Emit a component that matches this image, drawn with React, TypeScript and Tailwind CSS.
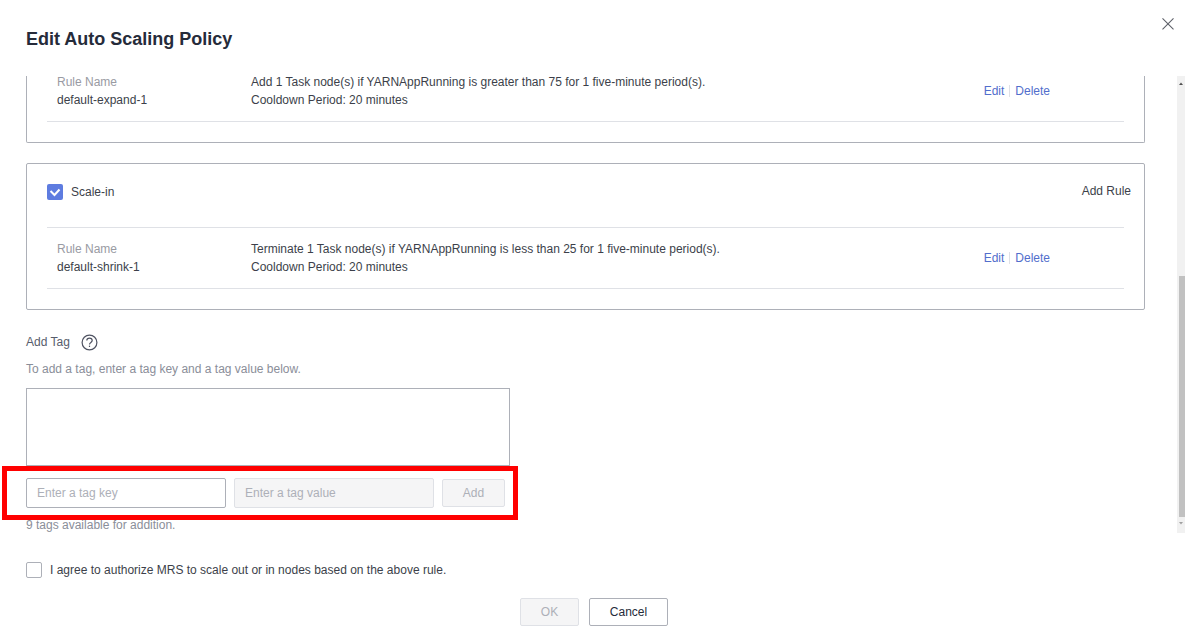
import React from "react";

const font = { fontFamily: '"Liberation Sans", Arial, sans-serif' };

function RuleRow({ name, line1, rowClass }: { name: string; line1: string; rowClass: string }) {
  return (
    <div className={`flex items-center border-b border-[#dfe1e6] mr-[20px] ${rowClass}`}>
      <div className="w-[204px] pl-[10px] leading-[18px]">
        <div className="text-[#999ba3]">Rule Name</div>
        <div className="text-[#3c3f4a]">{name}</div>
      </div>
      <div className="flex-1 leading-[18px] text-[#3c3f4a]">
        <div>{line1}</div>
        <div>Cooldown Period: 20 minutes</div>
      </div>
      <div className="flex items-center pr-[74px] text-[#526ecc]">
        <span>Edit</span>
        <span className="mx-[5px] h-[12px] w-px bg-[#dfe1e6]" />
        <span>Delete</span>
      </div>
    </div>
  );
}

export default function App() {
  return (
    <div style={font} className="relative w-[1185px] h-[635px] overflow-hidden bg-white text-[12px] text-[#252b3a]">
      <div className="flex h-[76px] items-start justify-between">
        <h1 className="pl-[26px] pt-[28px] text-[18px] leading-[22px] font-bold text-[#252b3a]">Edit Auto Scaling Policy</h1>
        <svg className="mt-[17px] mr-[11px]" width="13" height="13" viewBox="0 0 13 13" fill="none" stroke="#5e6069" strokeWidth="1.1">
          <path d="M1.5 1.3L12.5 12.3M12.5 1.3L1.5 12.3" />
        </svg>
      </div>

      <div className="flex h-[457px]">
        <div className="flex-1 overflow-hidden pl-[26px] pr-[32px]">
          <div className="h-[67px] border-x border-b border-[#adb0b8] rounded-b-[2px] pl-[20px]">
            <RuleRow
              name="default-expand-1"
              line1="Add 1 Task node(s) if YARNAppRunning is greater than 75 for 1 five-minute period(s)."
              rowClass="h-[46px] pb-[16px]"
            />
          </div>

          <div className="mt-[20px] h-[147px] border border-[#adb0b8] rounded-[2px] pl-[20px]">
            <div className="flex items-center justify-between h-[64px] pb-[7px] border-b border-[#dfe1e6] mr-[20px]">
              <div className="flex items-center">
                <span className="h-[16px] w-[16px] rounded-[2px] bg-[#5e7ce0]">
                  <svg width="16" height="16" viewBox="0 0 16 16" fill="none" stroke="#fff" strokeWidth="2">
                    <path d="M3.5 7L7.5 11L12.5 5.5" />
                  </svg>
                </span>
                <span className="ml-[8px] -mt-px text-[#3c3f4a]">Scale-in</span>
              </div>
              <span className="-mr-[7px] -mt-[3px] text-[#3c3f4a]">Add Rule</span>
            </div>
            <RuleRow
              name="default-shrink-1"
              line1="Terminate 1 Task node(s) if YARNAppRunning is less than 25 for 1 five-minute period(s)."
              rowClass="h-[61px]"
            />
          </div>

          <div className="mt-[23px] flex items-center h-[18px] text-[#575d6c]">
            <span>Add Tag</span>
            <svg className="ml-[11px]" width="17" height="17" viewBox="0 0 17 17" fill="none" stroke="#4f5362" strokeWidth="1.2">
              <circle cx="8.5" cy="8.5" r="7.4" />
              <path d="M5.8 6.6C5.8 5.1 7 4.2 8.5 4.2S11.2 5.1 11.2 6.6C11.2 8.4 8.5 8.4 8.5 10.4" />
              <path d="M8.5 11.6V13" />
            </svg>
          </div>
          <div className="mt-[9px] leading-[18px] text-[#8a8e99]">To add a tag, enter a tag key and a tag value below.</div>

          <div className="mt-[10px] h-[78px] w-[484px] border border-[#adb0b8]" />

          <div className="mt-[12px] flex items-center h-[30px] w-[479px]">
            <div className="flex h-[30px] w-[200px] items-center rounded-[2px] border border-[#adb0b8] pl-[10px] text-[#adb0b8]">Enter a tag key</div>
            <div className="ml-[8px] flex h-[30px] w-[200px] items-center rounded-[2px] border border-[#dfe1e6] bg-[#f5f5f6] pl-[10px] text-[#adb0b8]">Enter a tag value</div>
            <div className="ml-[8px] flex h-[28px] w-[63px] items-center justify-center rounded-[2px] border border-[#dfe1e6] bg-[#f5f5f6] text-[#adb0b8]">Add</div>
          </div>
          <div className="mt-[8px] leading-[18px] text-[#8a8e99]">9 tags available for addition.</div>
        </div>

        <div className="flex w-[8px] flex-col bg-[#f1f1f1]">
          <div className="h-[200px]">
            <svg width="8" height="16" viewBox="0 0 8 16"><path d="M2 9L4 6.5L6 9Z" fill="#505050" /></svg>
          </div>
          <div className="ml-[2px] h-[241px] w-[6px] bg-[#c1c1c1]" />
          <div className="flex-1">
            <svg width="8" height="16" viewBox="0 0 8 16"><path d="M2 5L4 7.5L6 5Z" fill="#a0a0a0" /></svg>
          </div>
        </div>
      </div>

      <div className="ml-[26px] mt-[28px] flex h-[18px] items-center">
        <span className="h-[16px] w-[16px] rounded-[2px] border border-[#adb0b8] bg-white" />
        <span className="ml-[8px] text-[#3c3f4a]">I agree to authorize MRS to scale out or in nodes based on the above rule.</span>
      </div>

      <div className="mt-[19px] flex justify-center pl-[3px]">
        <div className="flex h-[28px] w-[59px] items-center justify-center rounded-[2px] border border-[#dfe1e6] bg-[#f5f5f6] text-[#adb0b8]">OK</div>
        <div className="ml-[10px] flex h-[28px] w-[79px] items-center justify-center rounded-[2px] border border-[#adb0b8] bg-white text-[#252b3a]">Cancel</div>
      </div>

      <div className="absolute left-[2px] top-[466px] h-[54px] w-[516px] border-[5px] border-[#ff0000]" />
    </div>
  );
}
